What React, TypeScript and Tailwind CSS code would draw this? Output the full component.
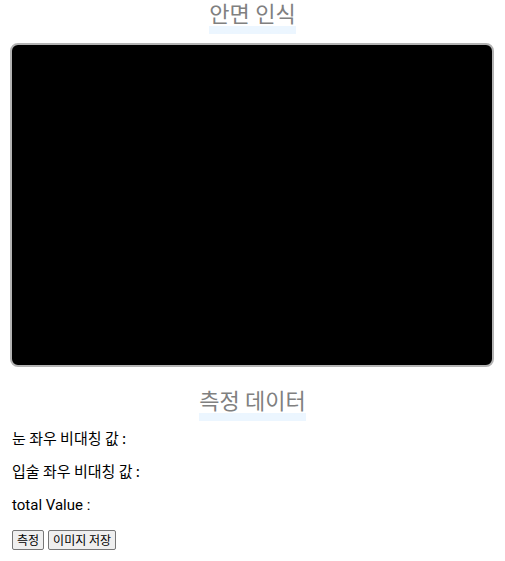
export default function App() {
  return (
    <main className="px-[10px] pb-3 font-['Noto_Sans_CJK_KR',sans-serif] text-[15px] text-black">
      <h1 className="flex h-[34px] justify-center font-[Roboto,'Noto_Sans_CJK_KR',sans-serif] text-[22px] leading-[30px] text-[#808080]">
        <span className="bg-linear-to-t from-[#ecf6ff] from-[8px] to-transparent to-[8px]">안면 인식</span>
      </h1>
      <video aria-label="안면 인식" className="mt-[9px] block aspect-[484/324] w-full max-w-[484px] rounded-lg border-2 border-[#b3b3b3] bg-black" />
      <h2 className="mt-5 flex h-[34px] justify-center font-[Roboto,'Noto_Sans_CJK_KR',sans-serif] text-[22px] leading-[30px] text-[#808080]">
        <span className="bg-linear-to-t from-[#ecf6ff] from-[8px] to-transparent to-[8px]">측정 데이터</span>
      </h2>
      <div className="px-[2px] leading-[33px]">
        <p>눈 좌우 비대칭 값 :</p>
        <p>입술 좌우 비대칭 값 :</p>
        <p><span className="font-[Roboto,sans-serif]">total Value :</span></p>
      </div>
      <div className="mt-2 flex gap-1 px-[2px] text-xs leading-[18px]">
        <button type="button" className="rounded-xs border border-[#767676] bg-[#efefef] px-1">측정</button>
        <button type="button" className="rounded-xs border border-[#767676] bg-[#efefef] px-1">이미지 저장</button>
      </div>
    </main>
  );
}
